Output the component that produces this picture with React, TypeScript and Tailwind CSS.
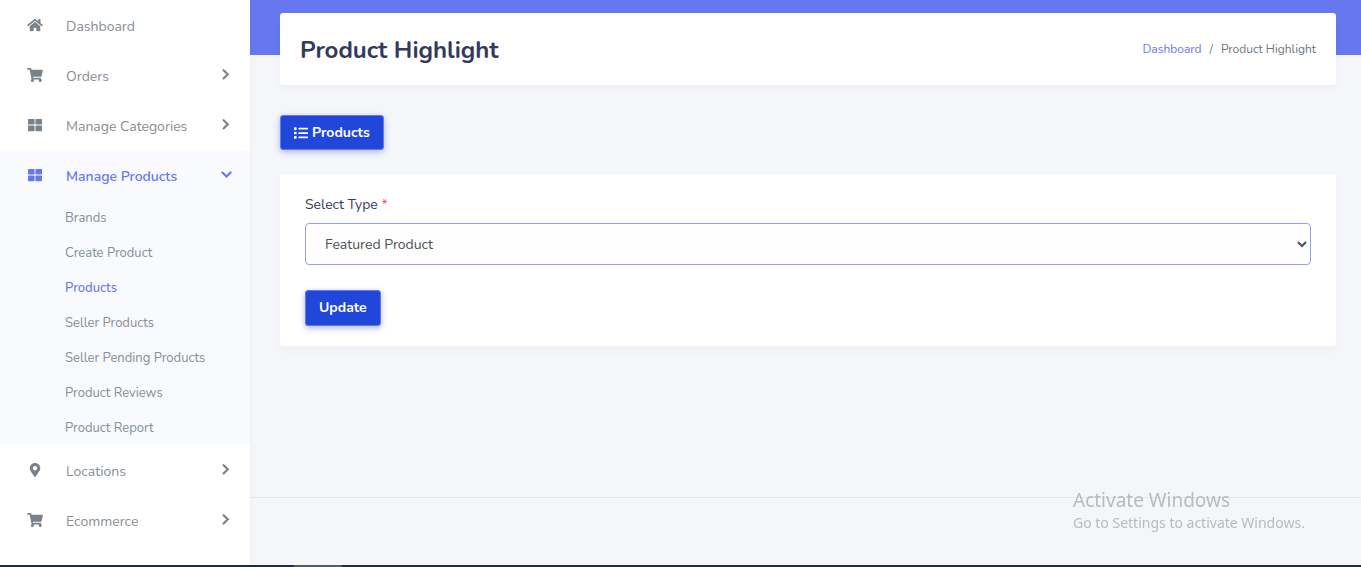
import { useState } from "react";
import type { IconType } from "react-icons";
import { FaHome, FaList, FaMapMarkerAlt, FaShoppingCart, FaThLarge } from "react-icons/fa";

type NavItem = {
  label: string;
  icon: IconType;
  hasMenu: boolean;
  children?: string[];
};

const navItems: NavItem[] = [
  { label: "Dashboard", icon: FaHome, hasMenu: false },
  { label: "Orders", icon: FaShoppingCart, hasMenu: true },
  { label: "Manage Categories", icon: FaThLarge, hasMenu: true },
  {
    label: "Manage Products",
    icon: FaThLarge,
    hasMenu: true,
    children: [
      "Brands",
      "Create Product",
      "Products",
      "Seller Products",
      "Seller Pending Products",
      "Product Reviews",
      "Product Report",
    ],
  },
  { label: "Locations", icon: FaMapMarkerAlt, hasMenu: true },
  { label: "Ecommerce", icon: FaShoppingCart, hasMenu: true },
];

function Chevron({ down }: { down: boolean }) {
  return (
    <svg
      viewBox="0 0 12 12"
      className="size-3 shrink-0"
      fill="none"
      stroke="currentColor"
      strokeWidth="2.1"
      strokeLinecap="round"
      strokeLinejoin="miter"
      aria-hidden="true"
    >
      <path d={down ? "M2.4 3.6 6.5 7.6 10.6 3.6" : "M3.6 1.2 7.8 5.3 3.6 9.4"} />
    </svg>
  );
}

function Sidebar() {
  return (
    <nav
      aria-label="Main"
      className="z-10 w-[250px] shrink-0 bg-white text-sm text-[#868e96] shadow-[0_4px_8px_rgba(0,0,0,0.03)]"
    >
      <ul>
        {navItems.map(({ label, icon: Icon, hasMenu, children }) => {
          const open = Boolean(children);
          return (
            <li key={label} className={open ? "bg-[#f9fafd]" : ""}>
              <a
                href="#"
                className={
                  open
                    ? "flex h-[50px] items-center pr-[18px] pl-[27px] font-semibold text-[#6777ef]"
                    : "flex h-[50px] items-center pr-[18px] pl-[27px] text-[#78828a]"
                }
              >
                <Icon className="mr-[23px] h-3.5 w-4 shrink-0" aria-hidden="true" />
                <span className={open ? "grow pt-1" : "grow pt-1 text-[#868e96]"}>{label}</span>
                {hasMenu && <Chevron down={open} />}
              </a>
              {children && (
                <ul>
                  {children.map((child) => (
                    <li key={child}>
                      <a
                        href="#"
                        className={
                          child === "Products"
                            ? "flex h-[35px] items-center pt-0.5 pl-[65px] text-[13px] font-medium text-[#6777ef]"
                            : "flex h-[35px] items-center pt-0.5 pl-[65px] text-[13px]"
                        }
                      >
                        {child}
                      </a>
                    </li>
                  ))}
                </ul>
              )}
            </li>
          );
        })}
      </ul>
    </nav>
  );
}

const buttonClass =
  "inline-flex items-center gap-1 rounded-[3px] border border-[#6777ef] bg-[#2046da] px-[13px] text-sm font-bold text-white shadow-[0_2px_6px_#acb5f6]";
const cardClass = "rounded-[3px] bg-white shadow-[0_4px_8px_rgba(0,0,0,0.03)]";

export default function App() {
  const [type, setType] = useState("Featured Product");

  return (
    <div className="flex min-h-screen flex-col bg-[#f4f6f9] font-['Nunito','Open_Sans',sans-serif]">
      <div className="flex grow">
        <Sidebar />
        <div className="flex min-w-0 grow flex-col bg-[linear-gradient(#6777ef_55px,#f4f6fa_55px)]">
          <main className="grow pt-[13px] pr-[25px] pl-[30px]">
            <header className={`${cardClass} flex h-[72px] items-center justify-between px-5`}>
              <h1 className="pt-0.5 text-2xl font-bold text-[#34395e]">Product Highlight</h1>
              <nav aria-label="Breadcrumb" className="flex gap-2 text-xs text-[#6c757d]">
                <a href="#" className="text-[#6777ef]">
                  Dashboard
                </a>
                <span>/</span>
                <span>Product Highlight</span>
              </nav>
            </header>

            <div className="mt-[30px] mb-6 flex">
              <a href="#" className={`${buttonClass} h-[35px]`}>
                <FaList className="size-3.5" aria-hidden="true" />
                Products
              </a>
            </div>

            <form
              className={`${cardClass} px-[25px] py-5`}
              onSubmit={(event) => event.preventDefault()}
            >
              <label htmlFor="type" className="mb-2 block text-sm leading-[21px] text-[#34395e]">
                Select Type <span className="text-[#fc544b]">*</span>
              </label>
              <select
                id="type"
                value={type}
                onChange={(event) => setType(event.target.value)}
                className="mb-[25px] block h-[42px] w-full rounded-[4px] border border-[#95a0f4] bg-[#fefeff] pl-[15px] text-sm text-[#495057] outline-none"
              >
                <option>Featured Product</option>
                <option>New Arrival</option>
                <option>Top Product</option>
                <option>Best Product</option>
              </select>
              <button type="submit" className={`${buttonClass} h-9`}>
                Update
              </button>
            </form>
          </main>
          <footer className="h-[68px] border-t border-[#e3e6ea]" />
        </div>
      </div>

      <div className="flex h-0.5 bg-[#1f2f42]">
        <div className="ml-[294px] w-12 bg-[#4d5f69]" />
      </div>

      <div className="pointer-events-none fixed right-[52px] bottom-[34px] z-20 w-[236px] font-['Segoe_UI','Noto_Sans',sans-serif] whitespace-nowrap text-[#b9babd]">
        <p className="text-[19px] leading-[25px]">Activate Windows</p>
        <p className="text-sm leading-5">Go to Settings to activate Windows.</p>
      </div>
    </div>
  );
}
